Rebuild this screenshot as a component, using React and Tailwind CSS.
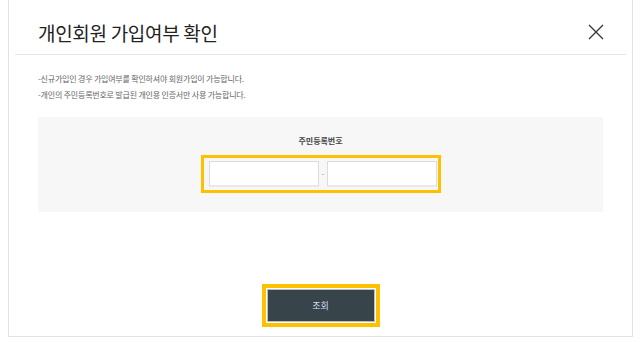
import React from 'react';

const font = { fontFamily: '"Noto Sans CJK KR", "Noto Sans", sans-serif' };

const CloseIcon = () => (
  <svg width="16" height="16" viewBox="0 0 16 16" fill="none" stroke="#333" strokeWidth="1.3">
    <path d="M1 1 L15 15 M15 1 L1 15" />
  </svg>
);

export default function App() {
  return (
    <div className="w-[643px] h-[342px] bg-white overflow-hidden" style={font}>
      <div className="ml-[8px] w-[625px] h-[337px] border-x border-b border-[#e2e2e2] flex flex-col">
        {/* header */}
        <div className="h-[54px] pt-[10px] pl-[29px] pr-[28px] flex items-center justify-between">
          <h1 className="text-[19px] leading-none text-[#222] font-normal tracking-[-0.3px]">개인회원 가입여부 확인</h1>
          <button className="w-[16px] h-[16px]">
            <CloseIcon />
          </button>
        </div>
        <div className="mx-[6px] h-px bg-[#e6e6e6]" />

        {/* notes */}
        <div className="pl-[29px] mt-[16px] text-[8px] leading-[16px] text-[#666] tracking-[-0.2px]">
          <p>-신규가입인 경우 가입여부를 확인하셔야 회원가입이 가능합니다.</p>
          <p>-개인의 주민등록번호로 발급된 개인용 인증서만 사용 가능합니다.</p>
        </div>

        {/* form box */}
        <div className="mx-[29px] mt-[14px] h-[95px] bg-[#f7f7f7] flex flex-col items-center">
          <p className="mt-[19px] text-[8px] leading-[10px] font-bold text-[#444]">주민등록번호</p>
          <div className="mt-[9px] w-[240px] h-[38px] border-[3px] border-[#ffc000] bg-[#f7f7f7] flex items-center px-[5px] gap-[3px]">
            <input className="w-[110px] h-[26px] bg-white border border-[#dcdcdc] border-b-2 border-b-[#e8e8e8] outline-none" />
            <span className="text-[8px] text-[#999] w-[3px] text-center">-</span>
            <input className="w-[110px] h-[26px] bg-white border border-[#dcdcdc] border-b-2 border-b-[#e8e8e8] outline-none" />
          </div>
        </div>

        {/* submit */}
        <div className="flex justify-center mt-[72px]">
          <div className="w-[118px] h-[43px] border-4 border-[#ffc000] bg-white p-px">
            <button className="w-full h-full bg-[#37444a] border border-[#b8bec2] text-[9px] text-[#dde] flex items-center justify-center">
              조회
            </button>
          </div>
        </div>
      </div>
    </div>
  );
}
